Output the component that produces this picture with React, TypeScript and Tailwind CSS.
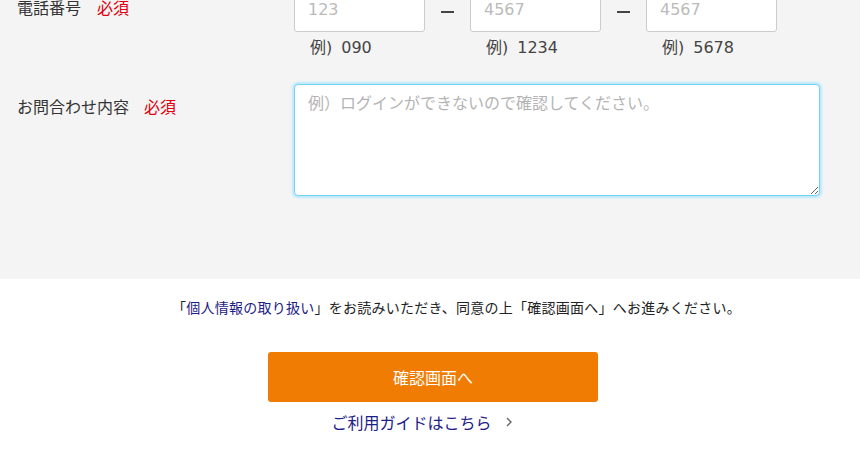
import React from "react";

const font = "[font-family:'DejaVu_Sans','Noto_Sans_CJK_JP',sans-serif]";

function PhoneInput({ ph }: { ph: string }) {
  return (
    <input
      type="text"
      placeholder={ph}
      className={`w-[131px] h-[40px] bg-white border border-[#cccccc] rounded-[3px] pl-[13px] pb-[6px] text-[16px] text-[#333] placeholder:text-[#bbbbbb] outline-none ${font}`}
    />
  );
}

function Dash() {
  return (
    <div className="w-[45px] flex justify-center">
      <span className="block w-[13px] h-[1.5px] bg-[#444]" />
    </div>
  );
}

function Example({ n }: { n: string }) {
  return (
    <div className="w-[131px] pl-[16px] flex">
      <span>例)</span>
      <span className="ml-[9px]">{n}</span>
    </div>
  );
}

export default function App() {
  return (
    <div className={`w-[860px] h-[468px] overflow-hidden bg-white text-[#333] ${font}`}>
      <section className="bg-[#f4f4f4] pl-[17px] pb-[83px]">
        {/* phone row */}
        <div className="flex -mt-[8px]">
          <div className="w-[277px] pt-[5px] text-[16px] leading-[24px] flex">
            <span>電話番号</span>
            <span className="ml-[16px] text-[#e0000f]">必須</span>
          </div>
          <div className="flex flex-col">
            <div className="flex items-center">
              <PhoneInput ph="123" />
              <Dash />
              <PhoneInput ph="4567" />
              <Dash />
              <PhoneInput ph="4567" />
            </div>
            <div className="flex mt-[4px] text-[16px] leading-[24px] text-[#444]">
              <Example n="090" />
              <div className="w-[45px]" />
              <Example n="1234" />
              <div className="w-[45px]" />
              <Example n="5678" />
            </div>
          </div>
        </div>
        {/* inquiry row */}
        <div className="flex mt-[24px]">
          <div className="w-[277px] pt-[12px] text-[16px] leading-[24px] flex">
            <span>お問合わせ内容</span>
            <span className="ml-[15px] text-[#e0000f]">必須</span>
          </div>
          <textarea
            placeholder="例）ログインができないので確認してください。"
            className="w-[526px] h-[112px] bg-white border border-[#6fd3f5] rounded-[4px] shadow-[0_0_2px_2px_#bde8fa] pl-[13px] pt-[5px] text-[16px] leading-[24px] placeholder:text-[#b4b4b4] outline-none [font-family:'Noto_Sans_CJK_JP',sans-serif]"
          />
        </div>
      </section>

      <div className="flex flex-col items-center pt-[16px]">
        <p className="pl-[53px] text-[14px] tracking-[0.25px] leading-[24px] text-[#222] [font-family:'Noto_Sans_CJK_JP',sans-serif]">
          「<span className="text-[#1d2088]">個人情報の取り扱い</span>」をお読みいただき、同意の上「確認画面へ」へお進みください。
        </p>
        <button className="ml-[6px] mt-[33px] w-[330px] h-[50px] bg-[#f07c04] rounded-[3px] text-white text-[16px] [font-family:'Noto_Sans_CJK_JP',sans-serif]">
          確認画面へ
        </button>
        <div className="mr-[16px] mt-[8px] flex items-center text-[16px] leading-[24px] text-[#1d2088] [font-family:'Noto_Sans_CJK_JP',sans-serif]">
          <span>ご利用ガイドはこちら</span>
          <svg className="ml-[13px]" width="8" height="12" viewBox="0 0 8 12" fill="none">
            <path d="M2 2l4 4-4 4" stroke="#666" strokeWidth="1.4" />
          </svg>
        </div>
      </div>
    </div>
  );
}
